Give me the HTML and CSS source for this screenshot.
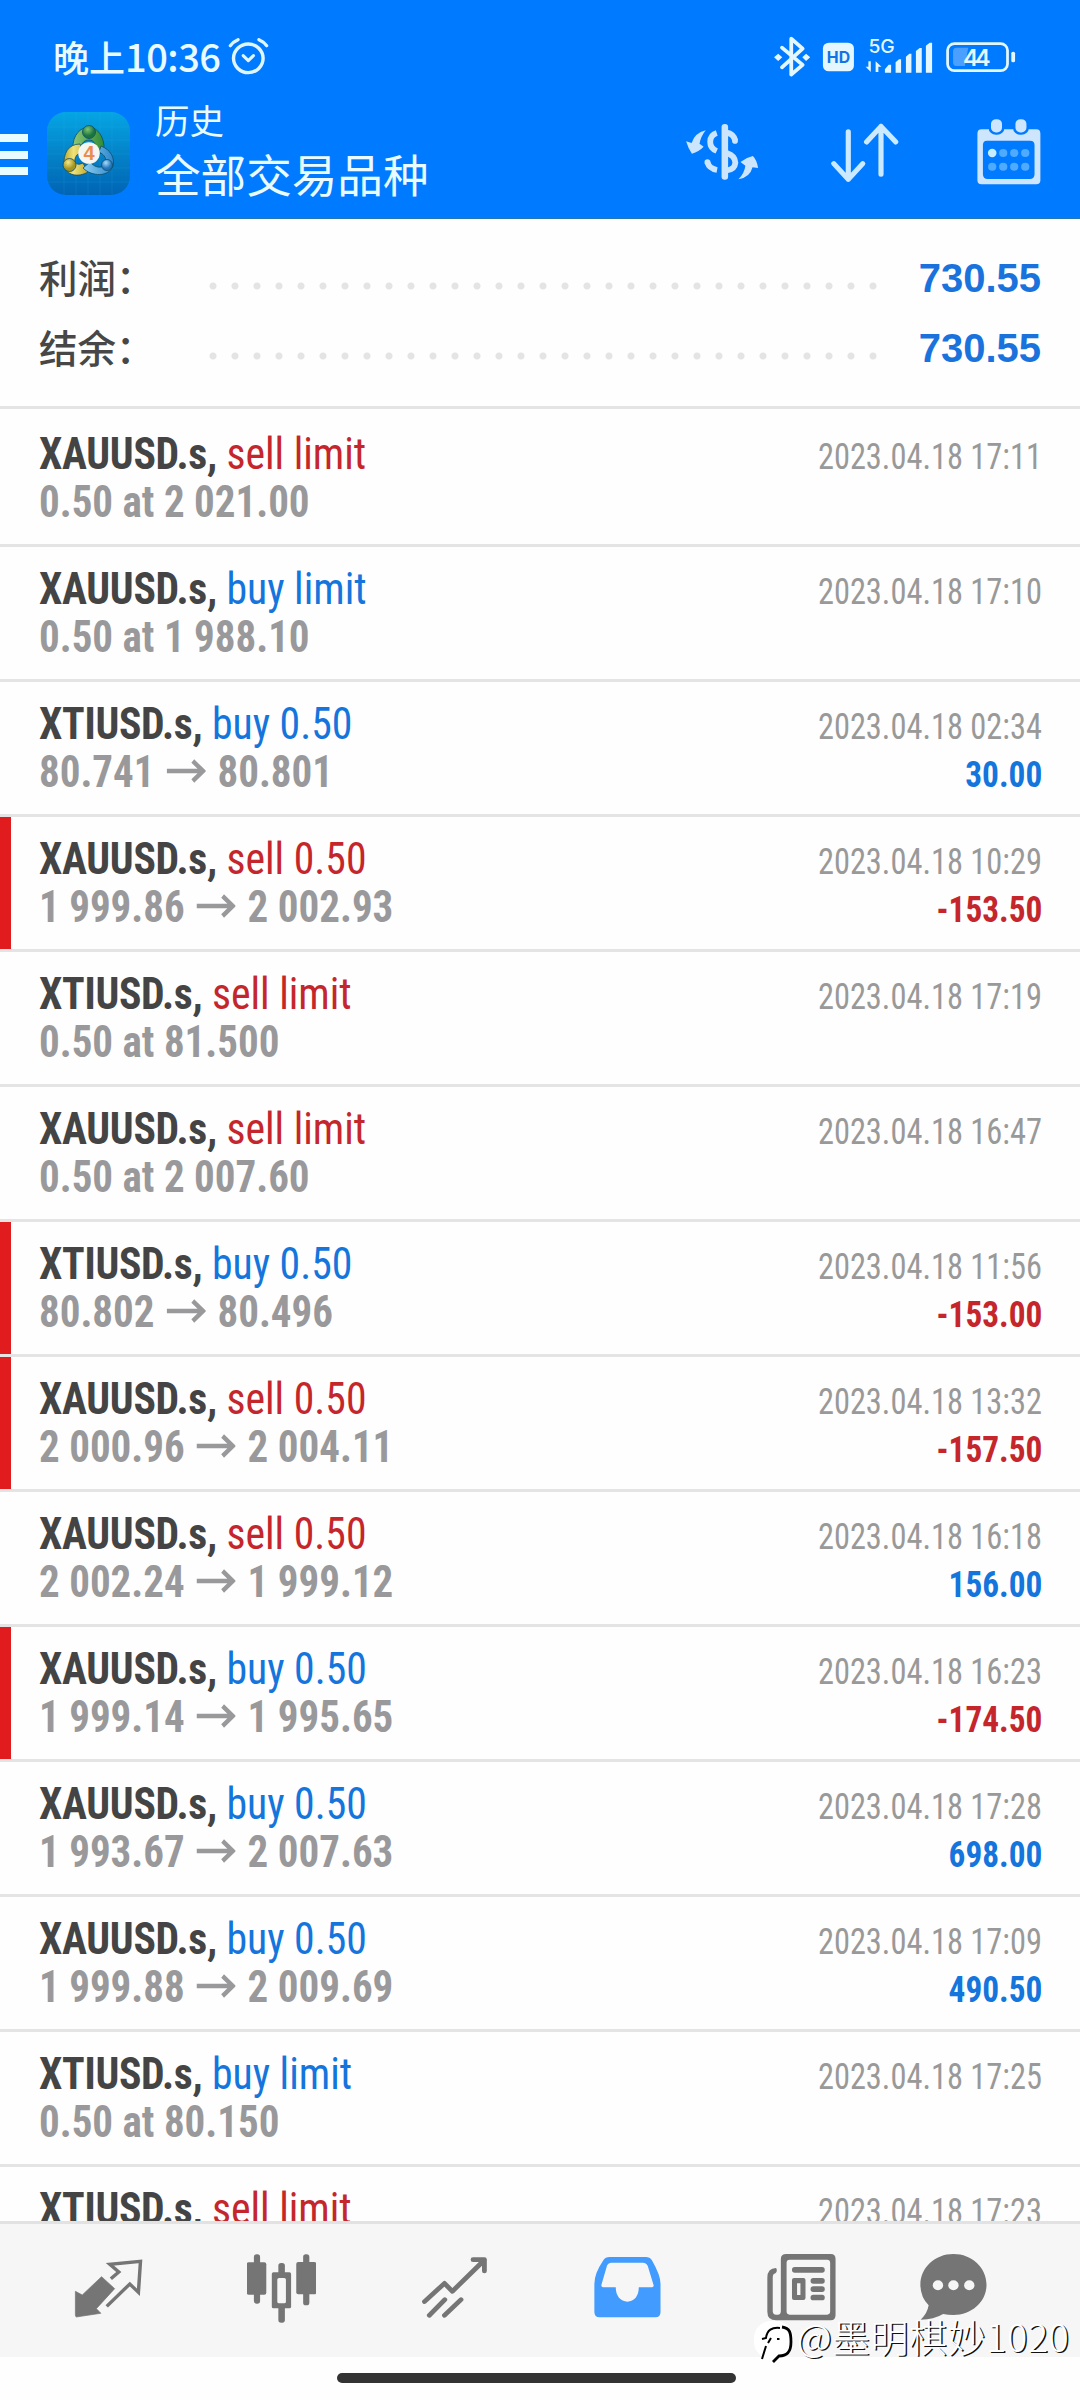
FILE: index.html
```html
<!DOCTYPE html>
<html lang="zh-CN">
<head>
<meta charset="utf-8">
<title>历史</title>
<link rel="stylesheet" href="styles.css">
</head>
<body>
<header class="header">
  <div class="status">
    <span class="period">晚上</span><span class="clock">10:36</span>
    <svg class="alarm" viewBox="662 112 120 116" preserveAspectRatio="none" fill="none" stroke="#dff6ff" stroke-linecap="round">
      <circle cx="721" cy="176" r="43" stroke-width="10"/>
      <path d="M669 138Q677 126 691 120M774 138Q766 126 752 120" stroke-width="10"/>
      <path d="M706 168L721 183L736 168" stroke-width="9" stroke-linejoin="round"/>
    </svg>
    <svg class="indicators" viewBox="676 108 708 124" preserveAspectRatio="none" fill="#e4f7ff">
      <g fill="none" stroke="#e4f7ff" stroke-width="11" stroke-linejoin="round" stroke-linecap="round">
        <path d="M702 143L762 195L729 224V116L762 146L702 202"/>
        <rect x="1183" y="131" width="174" height="81" rx="20" stroke-width="8"/>
      </g>
      <path d="M679 172l12-11l12 11l-12 11zM761 172l11-11l12 11l-12 11z"/>
      <rect x="821" y="128" width="90" height="86" rx="17"/>
      <path d="M960 184V216L945 200H953V184ZM974 216V184L991 200H982V216Z"/>
      <path d="M1001 218V208L1012 194H1019V218ZM1032 218V187L1042 178H1048V218ZM1062 218V170L1072 161H1078V218ZM1091 218V153L1102 144H1108V218ZM1120 218V137L1131 128H1138V218Z"/>
      <path d="M1243 143H1208Q1199 143 1199 154V187Q1199 198 1208 198H1233Z" fill="#4ba0ff"/>
      <rect x="1368" y="155" width="11" height="32" rx="5"/>
      <text class="hd" x="866" y="188" text-anchor="middle" textLength="68">HD</text>
      <text class="net" x="953" y="158" textLength="76">5G</text>
      <text class="level" x="1268" y="197" text-anchor="middle" textLength="80">44</text>
    </svg>
  </div>
  <div class="toolbar">
    <div class="menu"><i></i><i></i><i></i></div>
    <svg class="logo" viewBox="0 0 83 83">
      <defs>
        <linearGradient id="sky" x1="0" y1="0" x2="0" y2="1"><stop offset="0" stop-color="#05a5e4"/><stop offset=".55" stop-color="#0480c6"/><stop offset="1" stop-color="#0064b4"/></linearGradient>
        <radialGradient id="green" cx=".4" cy=".3"><stop offset="0" stop-color="#7fc574"/><stop offset="1" stop-color="#1c7440"/></radialGradient>
        <radialGradient id="gold" cx=".4" cy=".3"><stop offset="0" stop-color="#f4e88a"/><stop offset="1" stop-color="#a39420"/></radialGradient>
        <radialGradient id="blue" cx=".4" cy=".3"><stop offset="0" stop-color="#a4dcfa"/><stop offset="1" stop-color="#2476bc"/></radialGradient>
        <linearGradient id="goldArm"><stop offset="0" stop-color="#b9a92e"/><stop offset=".4" stop-color="#efe27a"/><stop offset="1" stop-color="#c0a92e"/></linearGradient>
        <linearGradient id="greenArm"><stop offset="0" stop-color="#8cc878"/><stop offset="1" stop-color="#2f8a35"/></linearGradient>
        <linearGradient id="blueArm"><stop offset="0" stop-color="#8fd0f2"/><stop offset="1" stop-color="#2a86cc"/></linearGradient>
      </defs>
      <rect width="83" height="83" rx="19" fill="url(#sky)"/>
      <path d="M17 0V83M29 0V83M41 0V83M53 0V83M65 0V83M0 15H83M0 28H83M0 42H83M0 56H83M0 70H83" stroke="#3fc0f0" stroke-opacity=".18" stroke-width=".8"/>
      <g stroke="#0d4d68" stroke-width=".8">
        <path d="M26 37C25 23 34 15 42 15C50 15 58 25 57 38L50 45C50 34 48 28 42 28C36 28 34 33 33 38Z" fill="url(#greenArm)"/>
        <path d="M33 32C21 32 16 42 17 54C19 63 31 66 41 60L36 51C30 54 27 51 28 47C29 43 31 41 36 41Z" fill="url(#goldArm)"/>
        <path d="M54 34C64 38 68 46 66 54C62 65 45 65 36 56L43 50C49 57 56 56 58 52C60 47 58 43 52 40Z" fill="url(#blueArm)"/>
        <circle cx="42" cy="20" r="6.500" fill="url(#green)"/>
        <circle cx="22.500" cy="53" r="6.500" fill="url(#gold)"/>
        <circle cx="60" cy="53" r="5.500" fill="url(#blue)"/>
      </g>
      <circle cx="42" cy="41" r="10.800" fill="#f5f6ef"/>
      <text class="four" x="42" y="48" text-anchor="middle">4</text>
    </svg>
    <div class="titles"><div class="small">历史</div><div class="large">全部交易品种</div></div>
    <svg class="act a1" viewBox="418 350 222 210" preserveAspectRatio="none" fill="#cbe5fd">
      <path d="M481 390Q467 408 463 430L475 439Q461 454 441 460Q430 444 424 423L440 428Q449 398 481 390Z"/>
      <path d="M576 537Q594 517 596 496L582 485Q599 471 618 467Q630 480 633 503L617 501Q609 532 576 537Z"/>
      <rect x="527" y="371" width="19" height="167" rx="9"/>
      <g fill="none" stroke="#cbe5fd" stroke-width="17">
        <path d="M513 398Q494 404 494 425Q494 444 513 452M486 486Q491 505 514 509"/>
        <path d="M542 397Q561 400 567 421M542 458Q566 466 567 487Q565 508 542 510"/>
        <path d="M486 485v1M566 421v1" stroke-linecap="round"/>
      </g>
    </svg>
    <svg class="act a2" viewBox="840 350 207 210" preserveAspectRatio="none" fill="none" stroke="#cbe9ff" stroke-width="15" stroke-linecap="round" stroke-linejoin="round">
      <path d="M896 394V537M854 490L896 537L938 490M991 522V378M949 425L991 378L1034 425"/>
    </svg>
    <svg class="act a3" viewBox="1262 350 197 210" preserveAspectRatio="none">
      <path fill="#cde5fd" fill-rule="evenodd" d="M1281 387H1440Q1452 387 1452 400V540Q1452 552 1440 552H1281Q1269 552 1269 540V400Q1269 387 1281 387ZM1297 421Q1285 421 1285 434V522Q1285 536 1299 536H1421Q1435 536 1435 522V434Q1435 421 1422 421Z"/>
      <g fill="#cde5fd" stroke="#007aff" stroke-width="7"><rect x="1305" y="353" width="39" height="47" rx="18"/><rect x="1376" y="353" width="39" height="47" rx="18"/></g>
      <g fill="#4fabff"><circle cx="1344" cy="458" r="12"/><circle cx="1376" cy="458" r="12"/><circle cx="1408" cy="458" r="12"/><circle cx="1312" cy="499" r="12"/><circle cx="1344" cy="499" r="12"/><circle cx="1376" cy="499" r="12"/><circle cx="1408" cy="499" r="12"/></g>
      <circle cx="1312" cy="458" r="12.500" fill="#c6ecff"/>
    </svg>
  </div>
</header>
<section class="summary">
  <div class="sum"><span>利润：</span><i class="dots"></i><b>730.55</b></div>
  <div class="sum"><span>结余：</span><i class="dots"></i><b>730.55</b></div>
</section>
<main class="list" id="list"></main>
<nav class="nav">
  <svg viewBox="215 305 200 220" preserveAspectRatio="none">
    <path d="M219 423L239 434L295 379L333 415L280 475L293 489L222 500Q219 499 219 494Z" fill="#757575" stroke="#757575" stroke-width="2" stroke-linejoin="round"/>
    <path d="M322 385L345 365L319 342L408 333L402 426L377 401L310 468" fill="none" stroke="#757575" stroke-width="10"/>
  </svg>
  <svg viewBox="716 305 200 220" preserveAspectRatio="none" fill="#757575">
    <rect x="736" y="312" width="18" height="148" rx="8"/><rect x="715" y="336" width="57" height="97" rx="6"/>
    <rect x="879" y="312" width="18" height="153" rx="8"/><rect x="859" y="335" width="58" height="97" rx="6"/>
    <rect x="807" y="338" width="19" height="179" rx="8"/><rect x="788" y="366" width="56" height="108" rx="5"/>
    <rect x="804" y="383" width="25" height="76" rx="5" fill="#f6f6f6"/>
  </svg>
  <svg viewBox="1218 305 200 220" preserveAspectRatio="none" fill="none" stroke="#757575" stroke-width="14" stroke-linecap="round" stroke-linejoin="round">
    <path d="M1231 454L1289 399L1312 423L1405 329M1372 328H1405V362M1245 495L1290 448M1289 495L1337 448"/>
  </svg>
  <svg viewBox="154 305 200 220" preserveAspectRatio="none">
    <path fill="#429bff" fill-rule="evenodd" d="M202 320H307Q319 320 325 330Q350 375 350 400V485Q350 501 335 501H173Q158 501 158 485V400Q158 370 184 330Q190 320 202 320ZM206 337Q199 337 195 345L178 405Q178 411 184 411H220C220 437 234 454 254 454C274 454 287 437 287 411H325Q331 411 330 405L313 347Q308 337 299 337Z"/>
  </svg>
  <svg viewBox="656 305 204 220" preserveAspectRatio="none" fill="#757575">
    <path fill-rule="evenodd" d="M713 311H845Q859 311 859 326V494Q859 510 845 510H683Q657 510 657 484V382Q657 354 683 353Q688 362 681 369Q673 370 673 382V482Q673 493 683 493H688Q697 493 697 482V326Q697 311 713 311ZM723 328Q714 328 714 338V483Q714 493 723 493H834Q843 493 843 483V338Q843 328 834 328Z"/>
    <rect x="730" y="350" width="97" height="17" rx="8"/>
    <path fill-rule="evenodd" d="M736 383H764Q770 383 770 389V443Q770 449 764 449H736Q730 449 730 443V389Q730 383 736 383ZM745 399V434H755V399Z"/>
    <rect x="785" y="383" width="42" height="17" rx="8"/><rect x="785" y="408" width="42" height="17" rx="8"/><rect x="785" y="433" width="42" height="17" rx="8"/>
  </svg>
  <svg class="chat" viewBox="1099 305 200 220" preserveAspectRatio="none">
    <path fill="#757575" d="M1199 311C1253 311 1295 352 1295 403C1295 454 1253 494 1199 494Q1183 494 1169 491Q1142 508 1104 508Q1123 490 1127 465Q1103 440 1103 403C1103 352 1145 311 1199 311Z"/>
    <g fill="#f6f6f6"><circle cx="1154" cy="405" r="15"/><circle cx="1199" cy="405" r="15"/><circle cx="1245" cy="405" r="15"/></g>
  </svg>
</nav>
<footer class="home"><i></i></footer>
<div class="mark">
  <svg viewBox="0 0 42 44"><rect x="0" y="2" width="39" height="38" rx="17" fill="#fff"/><path d="M8 20L12 19C13 11 18 8 26 9M17 19L14 24M12 27L8 40" fill="none" stroke="#000" stroke-width="2"/><path d="M28 8C36 9 37 14 37 23C37 33 33 37 25 37L19 43" fill="none" stroke="#000" stroke-width="2.800"/><path d="M23 19h2.500v2h-2.500z"/></svg>
  <span>@墨明棋妙1020</span>
</div>
<script src="list.js"></script>
</body>
</html>
```
FILE: styles.css
```css
* { box-sizing: border-box; }
body { margin: 0; width: 1080px; height: 2400px; overflow: hidden; display: flex; flex-direction: column; background: #fefefe; font-family: "Roboto Condensed", Roboto, "Noto Sans CJK SC", sans-serif; position: relative; }
svg { display: block; flex: none; }
i { font-style: normal; display: block; }

.header { height: 219px; background: #007aff; flex: none; color: #e9fbff; border-bottom: 1px solid #2277b4; font-family: "Noto Sans CJK SC", sans-serif; }
.status { height: 94px; display: flex; padding-left: 53px; line-height: 50px; padding-top: 31px; }
.period { font-size: 36px; font-weight: 500; width: 72px; }
.clock { font-size: 38px; font-weight: 500; width: 97px; letter-spacing: -0.5px; }
.alarm { width: 41.3px; height: 38.7px; margin: 6px 0 0 6px; }
.indicators { width: 243.800px; height: 41.300px; margin: 5px 0 0 503.500px; overflow: visible; }
.indicators text { font-family: Inter, sans-serif; }
.hd { font-size: 46px; font-weight: 700; fill: #1273e6; }
.net { font-size: 56px; font-weight: 500; }
.level { font-size: 68px; font-weight: 600; }

.toolbar { height: 124px; display: flex; padding-right: 37.600px; }
.menu { width: 27.500px; padding-top: 40px; margin-right: 19px; }
.menu i { height: 8px; background: #e8fbff; margin-bottom: 8.700px; }
.logo { width: 83px; height: 83px; margin-top: 17.500px; }
.four { font: 700 20px "Liberation Sans", sans-serif; fill: #ec8b4d; }
.titles { margin-left: 25.500px; width: 280px; padding-top: 5px; white-space: nowrap; }
.small { font-size: 34.500px; line-height: 40px; }
.large { font-size: 45.600px; line-height: 56px; margin-top: 6px; }
.act { height: 70px; margin-top: 23px; }
.a1 { width: 76.500px; margin-left: auto; }
.a2 { width: 71.300px; margin-left: 68.900px; }
.a3 { width: 67.800px; margin-left: 74px; }

.summary { height: 190px; flex: none; border-bottom: 3px solid #e4e4e4; padding: 24px 39px 0; }
.sum { height: 70px; display: flex; align-items: center; color: #474747; font: 500 38.500px "Noto Sans CJK SC", sans-serif; }
.sum span { width: 170px; flex: none; margin-top: -5px; }
.dots { width: 671px; height: 8px; margin-top: 15px; background: radial-gradient(circle at 4px 4px, #e4e4e4 3px, transparent 4px) 0 0 / 22px 8px repeat-x; }
.sum b { margin-left: auto; font: bold 40px "Liberation Sans", sans-serif; color: #1a73dc; margin-top: 1px; }

.list { flex: 1; min-height: 0; overflow: hidden; padding-top: 3px; }
.row { height: 135px; padding: 18px 38px 0 39px; border-bottom: 3px solid #e4e4e4; font-size: 44px; line-height: 48px; }
.row.loss { box-shadow: inset 11px 0 #e11c1e; }
.line { display: flex; justify-content: space-between; align-items: baseline; height: 48px; white-space: pre; }
.name { transform: scaleX(.948); transform-origin: left; color: #444; }
.name b { letter-spacing: -0.3px; }
.sell { color: #c5262c; }
.buy { color: #1475dc; }
.deal { transform: scaleX(.932); transform-origin: left; color: #99999b; font-weight: 700; display: flex; }
.arrow { width: 42px; height: 24px; margin: 11px 12.500px 0 13px; }
.time { font-size: 36px; transform: scaleX(.9); transform-origin: right; color: #999; }
.profit { font-size: 36px; font-weight: 700; transform: scaleX(.925); transform-origin: right; }

.nav { height: 136px; flex: none; background: #f6f6f6; border-top: 3px solid #e2e2e2; display: flex; padding: 27.500px 0 0 21.500px; }
.nav svg { width: 68.900px; height: 73.300px; margin: 0 52.200px; }
.nav .chat { margin: 0 0 0 31.500px; }
.home { height: 43px; flex: none; padding-top: 16px; }
.home i { width: 399px; height: 10px; border-radius: 5px; background: #333; margin-left: 337px; }
.mark { position: absolute; left: 754px; top: 2309px; display: flex; white-space: nowrap; }
.mark svg { width: 42px; height: 44px; margin-top: 10px; }
.mark span { margin-left: 1px; font: 300 38px/54px "Noto Sans CJK SC", sans-serif; letter-spacing: 0.5px; color: #fff; text-shadow: 1.5px 1px 0 #111; }
```
FILE: list.js
```javascript
// symbol, action, prices (open/close pair, or a single order price), time, profit
const deals = [
  ["XAUUSD.s", "sell limit", ["0.50 at 2 021.00"], "17:11"],
  ["XAUUSD.s", "buy limit", ["0.50 at 1 988.10"], "17:10"],
  ["XTIUSD.s", "buy 0.50", ["80.741", "80.801"], "02:34", "30.00"],
  ["XAUUSD.s", "sell 0.50", ["1 999.86", "2 002.93"], "10:29", "-153.50"],
  ["XTIUSD.s", "sell limit", ["0.50 at 81.500"], "17:19"],
  ["XAUUSD.s", "sell limit", ["0.50 at 2 007.60"], "16:47"],
  ["XTIUSD.s", "buy 0.50", ["80.802", "80.496"], "11:56", "-153.00"],
  ["XAUUSD.s", "sell 0.50", ["2 000.96", "2 004.11"], "13:32", "-157.50"],
  ["XAUUSD.s", "sell 0.50", ["2 002.24", "1 999.12"], "16:18", "156.00"],
  ["XAUUSD.s", "buy 0.50", ["1 999.14", "1 995.65"], "16:23", "-174.50"],
  ["XAUUSD.s", "buy 0.50", ["1 993.67", "2 007.63"], "17:28", "698.00"],
  ["XAUUSD.s", "buy 0.50", ["1 999.88", "2 009.69"], "17:09", "490.50"],
  ["XTIUSD.s", "buy limit", ["0.50 at 80.150"], "17:25"],
  ["XTIUSD.s", "sell limit", [], "17:23"]
];
const arrow = '<svg class="arrow" viewBox="0 0 42 24" fill="none" stroke="#99999b" stroke-width="4.5"><path d="M0 12H39M28 2L39 12L28 22"/></svg>';
document.getElementById("list").innerHTML = deals.map(([symbol, action, prices, time, profit = ""]) => {
  const loss = profit.startsWith("-");
  return `<div class="row${loss ? " loss" : ""}">
    <div class="line"><span class="name"><b>${symbol},</b> <span class="${action.split(" ")[0]}">${action}</span></span><span class="time">2023.04.18 ${time}</span></div>
    <div class="line"><span class="deal">${prices.map(p => `<span>${p}</span>`).join(arrow)}</span><span class="profit ${loss ? "sell" : "buy"}">${profit}</span></div>
  </div>`;
}).join("");
```
